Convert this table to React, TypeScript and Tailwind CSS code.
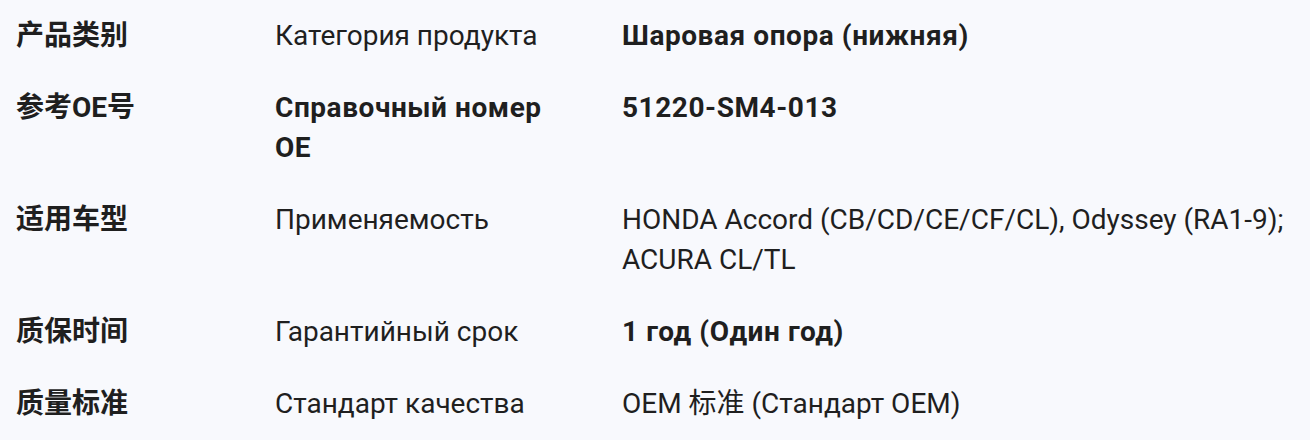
import React from 'react';

interface SpecRow {
  label: string;
  name: string;
  nameBold?: boolean;
  value: string;
  valueBold?: boolean;
}

const rows: SpecRow[] = [
  { label: '产品类别', name: 'Категория продукта', value: 'Шаровая опора (нижняя)', valueBold: true },
  { label: '参考OE号', name: 'Справочный номер OE', nameBold: true, value: '51220-SM4-013', valueBold: true },
  {
    label: '适用车型',
    name: 'Применяемость',
    value: 'HONDA Accord (CB/CD/CE/CF/CL), Odyssey (RA1-9); ACURA CL/TL',
  },
  { label: '质保时间', name: 'Гарантийный срок', value: '1 год (Один год)', valueBold: true },
  { label: '质量标准', name: 'Стандарт качества', value: 'OEM 标准 (Стандарт OEM)' },
];

export default function App() {
  return (
    <div className="min-h-screen bg-white font-['Roboto','Noto_Sans_CJK_SC',sans-serif] text-[#1f1f1f]">
      <table className="w-[1310px] table-fixed border-collapse bg-[#f8f9fd] text-[28px] leading-[40px]">
        <colgroup>
          <col className="w-[259px]" />
          <col className="w-[347px]" />
          <col />
        </colgroup>
        <tbody>
          {rows.map((row) => (
            <tr key={row.label}>
              <td className="px-4 py-4 align-top font-bold">{row.label}</td>
              <td
                className={`py-4 pl-4 pr-8 align-top ${
                  row.nameBold ? 'font-bold tracking-[0.02em]' : 'font-normal'
                }`}
              >
                {row.name}
              </td>
              <td
                className={`py-4 pl-4 pr-6 align-top ${
                  row.valueBold ? 'font-bold tracking-[0.02em]' : 'font-normal'
                }`}
              >
                {row.value}
              </td>
            </tr>
          ))}
        </tbody>
      </table>
    </div>
  );
}
